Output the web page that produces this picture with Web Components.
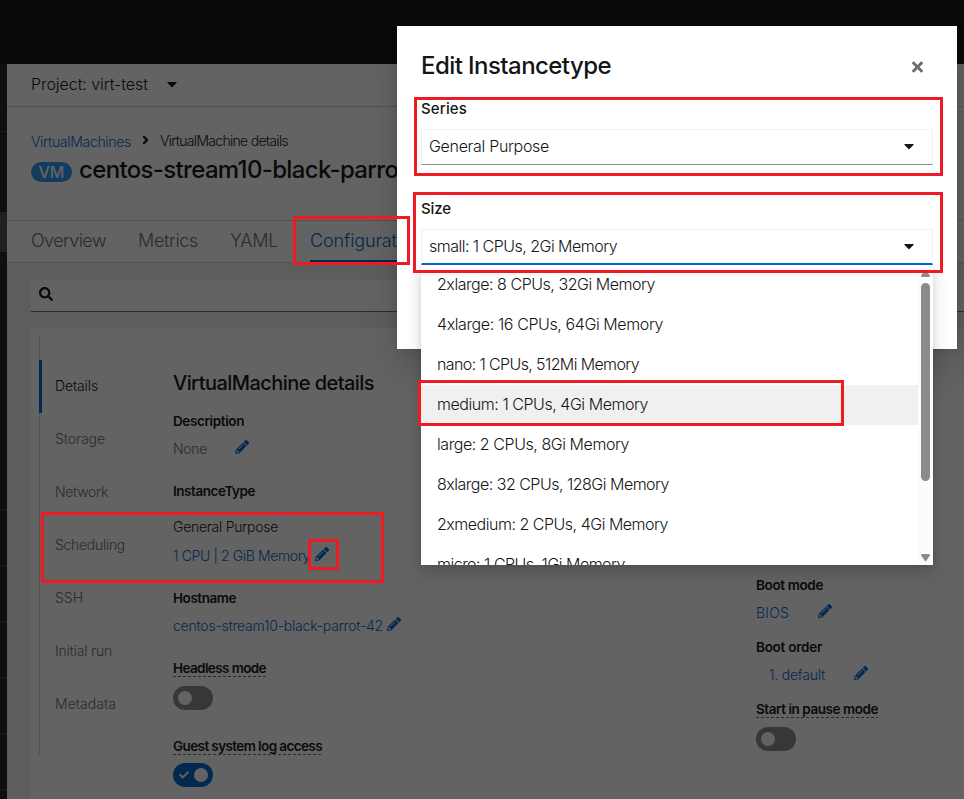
<!DOCTYPE html>
<html lang="en">
<head>
<meta charset="utf-8">
<title>Edit Instancetype</title>
<style>
html,body{margin:0;padding:0}
body{width:964px;height:799px;overflow:hidden;position:relative;background:#151515;font-family:Inter,"Liberation Sans",sans-serif;font-size:14px;font-weight:350;color:#151515}
</style>
</head>
<body>
<console-page></console-page>
<console-backdrop></console-backdrop>
<edit-dialog></edit-dialog>
<mark-box style="left:414px;top:97px;width:529px;height:79px"></mark-box>
<mark-box style="left:413px;top:192px;width:530px;height:81px"></mark-box>
<mark-box style="left:293px;top:216px;width:117px;height:49px"></mark-box>
<mark-box style="left:418px;top:380px;width:426px;height:46px"></mark-box>
<mark-box style="left:41px;top:512px;width:343px;height:71px"></mark-box>
<mark-box style="left:308px;top:539px;width:31px;height:31px"></mark-box>
<script>
const ICONS={
pencil:[512,'M497.9 142.1l-46.1 46.1c-4.7 4.7-12.3 4.7-17 0l-111-111c-4.7-4.7-4.7-12.3 0-17l46.1-46.1c18.7-18.7 49.1-18.7 67.9 0l60.1 60.1c18.8 18.7 18.8 49.1 0 67.9zM284.2 99.8L21.6 362.4.4 483.9c-2.9 16.4 11.4 30.6 27.8 27.8l121.5-21.3 262.6-262.6c4.7-4.7 4.7-12.3 0-17l-111-111c-4.8-4.7-12.4-4.7-17.1 0zM124.1 339.9c-5.5-5.5-5.5-14.3 0-19.8l154-154c5.5-5.5 14.3-5.5 19.8 0s5.5 14.3 0 19.8l-154 154c-5.5 5.5-14.3 5.5-19.8 0zM88 424h48v36.3l-64.5 11.3-31.1-31.1L51.7 376H88v48z'],
times:[352,'M242.72 256l100.07-100.07c12.28-12.28 12.28-32.19 0-44.48l-22.24-22.24c-12.28-12.28-32.19-12.28-44.48 0L176 189.28 75.93 89.21c-12.28-12.28-32.19-12.28-44.48 0L9.21 111.45c-12.28 12.28-12.28 32.19 0 44.48L109.28 256 9.21 356.07c-12.28 12.28-12.28 32.19 0 44.48l22.24 22.24c12.28 12.28 32.2 12.28 44.48 0L176 322.72l100.07 100.07c12.28 12.28 32.2 12.28 44.48 0l22.24-22.24c12.28-12.28 12.28-32.19 0-44.48L242.72 256z'],
search:[512,'M505 442.7L405.3 343c-4.5-4.5-10.6-7-17-7H372c27.6-35.3 44-79.7 44-128C416 93.1 322.9 0 208 0S0 93.1 0 208s93.1 208 208 208c48.3 0 92.7-16.4 128-44v16.3c0 6.4 2.5 12.5 7 17l99.7 99.7c9.4 9.4 24.6 9.4 33.9 0l28.3-28.3c9.4-9.4 9.4-24.6.1-34zM208 336c-70.7 0-128-57.2-128-128 0-70.7 57.2-128 128-128 70.7 0 128 57.2 128 128 0 70.7-57.2 128-128 128z'],
caret:[320,'M31.3 192h257.3c17.8 0 26.7 21.5 14.1 34.1L174.1 354.8c-7.8 7.8-20.5 7.8-28.3 0L17.2 226.1C4.6 213.5 13.5 192 31.3 192z'],
angle:[256,'M224.3 273l-136 136c-9.4 9.4-24.6 9.4-33.9 0l-22.6-22.6c-9.4-9.4-9.4-24.6 0-33.9l96.4-96.4-96.4-96.4c-9.4-9.4-9.4-24.6 0-33.9L54.3 103c9.4-9.4 24.6-9.4 33.9 0l136 136c9.5 9.4 9.5 24.6.1 34z'],
check:[512,'M173.898 439.404l-166.4-166.4c-9.997-9.997-9.997-26.206 0-36.204l36.203-36.204c9.997-9.998 26.207-9.998 36.204 0L192 312.69 432.095 72.596c9.997-9.997 26.207-9.997 36.204 0l36.203 36.204c9.997 9.997 9.997 26.206 0 36.204l-294.4 294.401c-9.998 9.997-26.207 9.997-36.204-.001z']
};
function component(name,html,after){
  const t=document.createElement('template');
  t.innerHTML=html;
  customElements.define(name,class extends HTMLElement{
    constructor(){super();this.attachShadow({mode:'open'}).append(t.content.cloneNode(true));}
    connectedCallback(){if(after)after(this,this.shadowRoot);}
  });
}

component('console-backdrop','<style>:host{position:absolute;inset:0;background:rgba(3,3,3,.62)}</style>');
component('mark-box','<style>:host{position:absolute;box-sizing:border-box;border:3px solid #ed1c24}</style>');

component('console-page',`<style>
:host{display:flex;flex-direction:column;height:799px;width:964px}
header{height:64px;background:#151515;flex:none}
.body{display:flex;flex:1;min-height:0}
main{flex:1;min-width:0;display:flex;flex-direction:column;background:#f0f0f0}
.project{height:40px;padding-bottom:2px;border-bottom:1px solid #d2d2d2;background:#fff;display:flex;align-items:center;padding-left:24px;gap:19px;font-size:16px}
.head{height:113px;background:#fff;padding-left:24px;display:flex;flex-direction:column;border-bottom:1px solid #d2d2d2}
.crumbs{display:flex;align-items:center;height:20px;margin-top:23px;gap:11px}
.crumbs a{color:#06c;position:relative;top:1px}
.title{display:flex;align-items:center;height:32px;gap:7px;margin-top:3px;font-size:24px;font-weight:450;white-space:nowrap}
.badge{width:41px;height:20px;margin-top:6px;border-radius:10px;background:#2b9af3;color:#fff;font-size:16px;font-weight:500;display:flex;align-items:center;justify-content:center;line-height:20px}
.tabs{height:41px;background:#fff;border-bottom:1px solid #d2d2d2;display:flex;padding-left:24px;gap:32px;font-size:18px;color:#6a6e73;line-height:40px}
.tabs .on{color:#06c;border-bottom:3px solid #06c;box-sizing:border-box;height:42px}
.search{margin:17px 0 0 24px;height:28px;padding-bottom:3px;background:#fff;border-bottom:1px solid #6a6e73;display:flex;align-items:center;padding-left:8px}
.card{margin:16px 0 0 24px;background:#fff;flex:1;display:flex;padding:8px 0 0 8px;min-height:0}
.left{width:583px;flex:none;margin-top:30px}
.right{margin-top:239px}
</style>
<header></header>
<div class="body"><side-rail></side-rail><main>
<div class="project"><fit-text w="117">Project: virt-test</fit-text><fa-icon name="caret" size="16"></fa-icon></div>
<div class="head"><div class="crumbs"><a><fit-text w="100">VirtualMachines</fit-text></a><fa-icon name="angle" size="14"></fa-icon><fit-text w="128">VirtualMachine details</fit-text></div>
<div class="title"><span class="badge"><fit-text w="26">VM</fit-text></span><fit-text w="366">centos-stream10-black-parrot-42</fit-text></div></div>
<div class="tabs"><fit-text w="75">Overview</fit-text><fit-text w="60">Metrics</fit-text><fit-text w="48">YAML</fit-text><span class="on"><fit-text w="112">Configuration</fit-text></span></div>
<div class="search"><fa-icon name="search" size="14"></fa-icon></div>
<div class="card"><jump-links></jump-links>
<div class="left">
<vm-row h="34" style="font-size:20px;font-weight:450"><fit-text w="201">VirtualMachine details</fit-text></vm-row>
<vm-row h="42" bold><fit-text w="71">Description</fit-text></vm-row>
<vm-row h="14"><fit-text w="34" style="color:#6a6e73">None</fit-text><edit-icon style="margin-left:28px"></edit-icon></vm-row>
<vm-row h="70" bold><fit-text w="82">InstanceType</fit-text></vm-row>
<vm-row h="2"><fit-text w="105">General Purpose</fit-text></vm-row>
<vm-row h="56"><fit-text w="137" style="color:#06c">1 CPU | 2 GiB Memory</fit-text><edit-icon style="margin-left:5px"></edit-icon></vm-row>
<vm-row h="28" bold><fit-text w="63">Hostname</fit-text></vm-row>
<vm-row h="28"><fit-text w="210" style="color:#06c">centos-stream10-black-parrot-42</fit-text><edit-icon style="margin-left:4px"></edit-icon></vm-row>
<vm-row h="56" bold dashed><fit-text w="93">Headless mode</fit-text></vm-row>
<toggle-switch style="margin-bottom:26px;margin-top:-10px"></toggle-switch>
<vm-row h="20" bold dashed><fit-text w="149">Guest system log access</fit-text></vm-row>
<toggle-switch on style="margin-top:7px"></toggle-switch>
</div>
<div class="right">
<vm-row h="20" bold><fit-text w="67">Boot mode</fit-text></vm-row>
<vm-row h="36"><fit-text w="33" style="color:#06c">BIOS</fit-text><edit-icon style="margin-left:29px"></edit-icon></vm-row>
<vm-row h="32" bold><fit-text w="66">Boot order</fit-text></vm-row>
<vm-row h="24"><fit-text w="56" style="color:#06c;margin-left:13px">1. default</fit-text><edit-icon style="margin-left:29px"></edit-icon></vm-row>
<vm-row h="44" bold dashed><fit-text w="122">Start in pause mode</fit-text></vm-row>
<toggle-switch style="margin-top:-4px"></toggle-switch>
</div></div></main></div>`);

component('side-rail',`<style>:host{display:flex;flex-direction:column;width:7px;flex:none;background:#212427}
i{display:block;box-sizing:border-box;height:56px;flex:none;border-bottom:1px solid #3c3f42}
.a{height:68px}.b{height:80px;border:0}.c{height:40px;border:0;background:#4f5255}.d{height:258px}</style>
<i class="a"></i><i class="b"></i><i class="c"></i><i class="d"></i><i></i><i></i><i></i><i></i><i></i>`);

component('jump-links',`<style>:host{display:block;width:134px;height:419px;flex:none;box-sizing:border-box;border-left:1px solid #d2d2d2;padding-top:24px;color:#6a6e73}
div{height:53px;display:flex;align-items:center;margin-left:-1px;box-sizing:border-box;padding:0 0 2px 16px}
.on{color:#151515;border-left:3px solid #06c;padding-left:13px}</style>
<div class="on"><fit-text w="43">Details</fit-text></div><div><fit-text w="50">Storage</fit-text></div><div><fit-text w="53">Network</fit-text></div><div><fit-text w="70">Scheduling</fit-text></div><div><fit-text w="28">SSH</fit-text></div><div><fit-text w="57">Initial run</fit-text></div><div><fit-text w="61">Metadata</fit-text></div>`);

component('vm-row',`<style>:host{display:flex;align-items:center;white-space:nowrap}:host([bold]){font-weight:600;font-size:13.5px}
.t{display:flex;align-items:center;line-height:18px}
:host([dashed]) .t{background:repeating-linear-gradient(90deg,#6a6e73 0 3px,transparent 3px 5px) 0 100%/100% 1px no-repeat}</style><span class="t"><slot></slot></span>`,
(el)=>{el.style.height=el.getAttribute('h')+'px';});

component('toggle-switch',`<style>:host{display:flex;align-items:center;width:40px;height:24px;border-radius:12px;background:#8a8d90;box-sizing:border-box;padding:0 4.6px}
:host([on]){background:#06c;justify-content:space-between;padding-left:6px}
b{width:14.6px;height:14.6px;border-radius:50%;background:#fff}fa-icon{display:none;color:#fff}:host([on]) fa-icon{display:block}</style><fa-icon name="check" size="10"></fa-icon><b></b>`);

component('edit-icon','<style>:host{display:block;color:#06c;height:14px;position:relative;top:-2px}</style><fa-icon name="pencil" size="14"></fa-icon>');

component('fa-icon','<style>:host{display:block;flex:none}svg{display:block;fill:currentColor}</style><svg><path/></svg>',(el,r)=>{
  const [w,d]=ICONS[el.getAttribute('name')],s=+el.getAttribute('size'),v=r.querySelector('svg');
  v.setAttribute('viewBox','0 0 '+w+' 512');v.setAttribute('height',s);v.setAttribute('width',s*w/512);
  r.querySelector('path').setAttribute('d',d);
});

component('edit-dialog',`<style>:host{display:block;position:absolute;left:397px;top:26px;width:560px;height:323px;box-sizing:border-box;padding:23px 24px 0;background:#fff;box-shadow:0 16px 32px rgba(3,3,3,.16),0 0 8px rgba(3,3,3,.1)}
.h{display:flex;justify-content:space-between;align-items:center;height:32px;font-size:24px;font-weight:450}
.h fa-icon{color:#6a6e73;margin:4px 10px 0 0}
label{display:flex;align-items:center;height:20px;font-weight:500;font-size:15px}
.one{margin-top:17px}.two{margin-top:33px}
select-box{margin-top:11px}.menu{position:relative}
size-menu{position:absolute;left:0;top:0}
</style>
<div class="h"><fit-text w="190">Edit Instancetype</fit-text><fa-icon name="times" size="16"></fa-icon></div>
<label class="one"><fit-text w="46">Series</fit-text></label><select-box><fit-text w="120">General Purpose</fit-text></select-box>
<label class="two"><fit-text w="30">Size</fit-text></label><select-box open><fit-text w="188">small: 1 CPUs, 2Gi Memory</fit-text></select-box>
<div class="menu"><size-menu></size-menu></div>`);

component('select-box',`<style>:host{display:flex;align-items:center;justify-content:space-between;height:36px;width:512px;box-sizing:border-box;border:1px solid #f0f0f0;border-bottom-color:#8a8d90;padding:0 18px 2px 7px;font-size:16px;background:#fff}
:host([open]){border-bottom:2px solid #06c;padding-bottom:1px}</style><slot></slot><fa-icon name="caret" size="16"></fa-icon>`);

component('size-menu',`<style>:host{display:flex;width:512px;height:300px;overflow:hidden;background:#fff;box-shadow:0 8px 16px rgba(3,3,3,.16),0 0 6px rgba(3,3,3,.08);font-size:16px;clip-path:inset(0 -30px -30px -30px)}
ul{list-style:none;margin:0;padding:0;flex:1}li{height:40px;box-sizing:border-box;display:flex;align-items:center;padding:0 0 2px 16px}.hot{background:#f0f0f0}
.bar{width:15px;background:#fcfcfc;display:flex;flex-direction:column;align-items:center;padding:5px 0 4px;box-sizing:border-box}
.bar b{width:9px;height:198px;border-radius:5px;background:#8b8b8b;margin:6px 0 auto}svg{display:block;fill:#8b8b8b}</style>
<ul><li><fit-text w="218">2xlarge: 8 CPUs, 32Gi Memory</fit-text></li><li><fit-text w="226">4xlarge: 16 CPUs, 64Gi Memory</fit-text></li><li><fit-text w="202">nano: 1 CPUs, 512Mi Memory</fit-text></li><li class="hot"><fit-text w="211">medium: 1 CPUs, 4Gi Memory</fit-text></li><li><fit-text w="192">large: 2 CPUs, 8Gi Memory</fit-text></li><li><fit-text w="232">8xlarge: 32 CPUs, 128Gi Memory</fit-text></li><li><fit-text w="231">2xmedium: 2 CPUs, 4Gi Memory</fit-text></li><li><fit-text w="188">micro: 1 CPUs, 1Gi Memory</fit-text></li></ul>
<div class="bar"><svg width="9" height="7"><path d="M3.5 .5Q4.500-.5 5.500.5L8.800 5.500Q9 7 8 7H1Q0 7 .2 5.500Z"/></svg><b></b><svg width="9" height="7"><path d="M3.500 6.500Q4.500 7.500 5.500 6.500L8.800 1.500Q9 0 8 0H1Q0 0 .2 1.500Z"/></svg></div>`);

/* Tracks its text so that the run takes the width given in w. */
component('fit-text','<style>:host{display:block;white-space:nowrap;flex:none}span{display:inline-block}</style><span><slot></slot></span>',(el,r)=>{
  const s=r.querySelector('span'),w=+el.getAttribute('w');
  const c=document.createElement('canvas').getContext('2d'),cs=getComputedStyle(el);
  c.font=cs.fontWeight+' '+cs.fontSize+' '+cs.fontFamily;
  const n=el.textContent.length;
  s.style.letterSpacing=((w-c.measureText(el.textContent).width)/n).toFixed(3)+'px';
  el.style.width=w+'px';
});
</script>
</body>
</html>
